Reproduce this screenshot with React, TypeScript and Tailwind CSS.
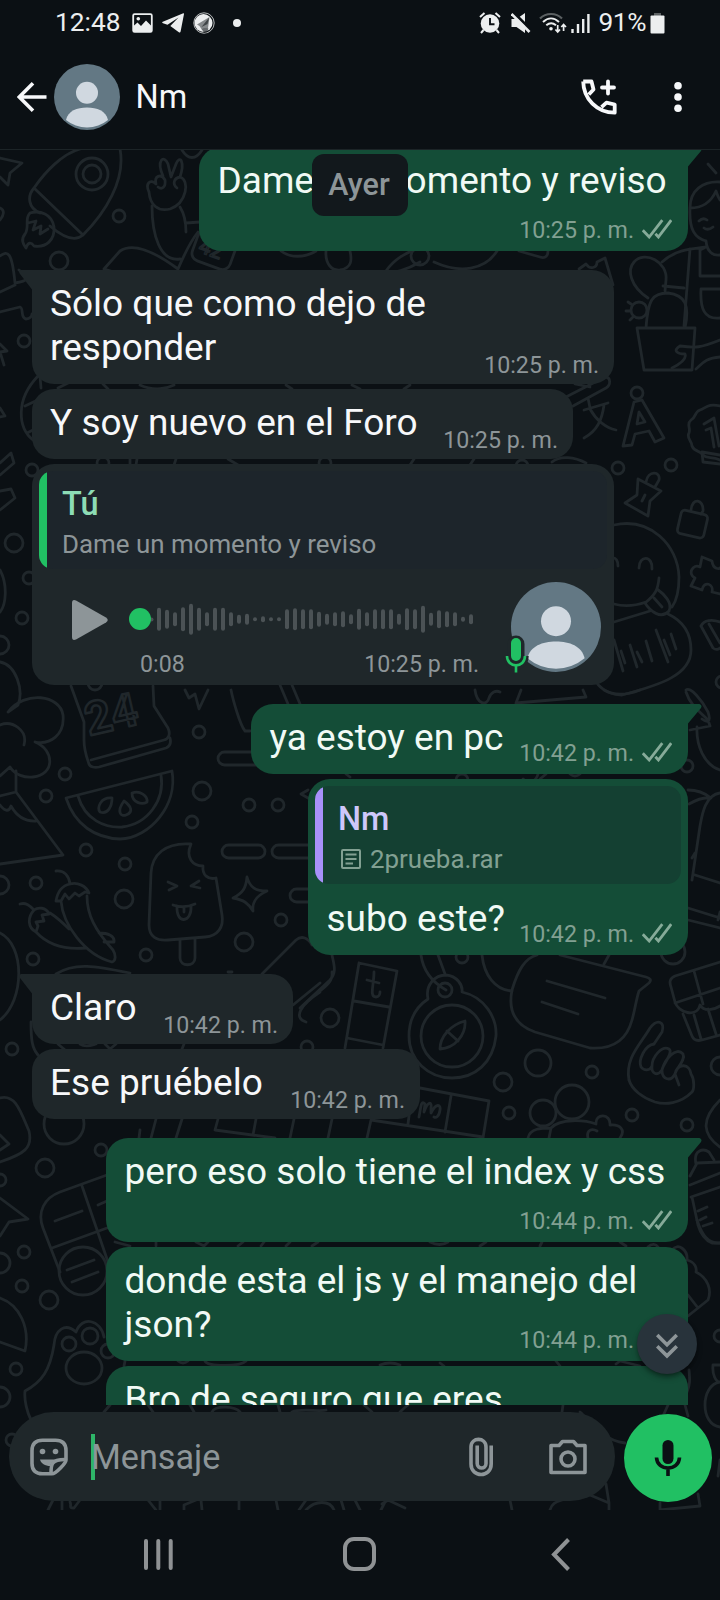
import type { ReactNode } from 'react'
import clsx from 'clsx'

const WAVE = [
    23, 19, 14, 24, 31, 23, 14, 23, 23, 14, 9, 11, 4, 6, 4, 4, 20, 22, 20, 20, 15, 11, 14, 16, 10,
    21, 14, 20, 20, 20, 11, 22, 20, 27, 13, 18, 16, 14, 5, 10,
]

// x, y, radius of the small bubbles spread over the wallpaper
const DOTS = [
    [119, 216, 6], [59, 261, 9], [24, 341, 6], [32, 470, 6], [14, 543, 9], [29, 578, 6], [22, 618, 6], [0, 645, 9],
    [199, 732, 6], [65, 774, 6], [46, 796, 6], [202, 791, 9], [249, 805, 6], [278, 805, 6], [192, 822, 6],
    [86, 850, 6], [125, 864, 6], [36, 883, 6], [0, 885, 9], [124, 899, 9], [146, 955, 6], [33, 959, 6],
    [281, 920, 6], [244, 942, 9], [12, 1049, 6], [330, 1018, 9], [307, 1047, 6], [503, 1082, 9], [538, 1063, 13],
    [592, 1072, 6], [509, 1113, 6], [543, 1113, 13], [572, 1102, 17], [632, 1115, 6], [687, 1125, 6],
    [673, 952, 12], [462, 957, 6], [720, 1066, 9], [618, 468, 6], [671, 465, 6], [637, 393, 6], [687, 766, 6],
    [462, 780, 6], [101, 1150, 6], [45, 1168, 9], [0, 1180, 6], [24, 1252, 6], [0, 1263, 10], [22, 1286, 6],
    [49, 1300, 9], [16, 1369, 6], [0, 1397, 10], [12, 1440, 6], [720, 1336, 6], [64, 1124, 20], [325, 463, 6],
    [103, 463, 6], [522, 466, 6], [722, 682, 6], [95, 683, 7],
]

function Wallpaper() {
    return (
        <svg
            className="absolute inset-0 h-full w-full"
            viewBox="0 150 720 1360"
            fill="none"
            stroke="#20272b"
            strokeWidth="2.8"
            strokeLinecap="round"
            strokeLinejoin="round"
        >
            {DOTS.map(([x, y, r], i) => (
                <circle key={i} cx={x} cy={y} r={r} />
            ))}

            {/* star, rocket and hand */}
            <path d="M0 158L22 163L10 173L8 185L0 177M0 208C5 210 4 215 0 220" />
            <path d="M34 188L83 235M34 188C45 172 62 154 80 149M120 149C126 180 105 213 83 235C75 242 64 238 50 226M34 188C27 196 28 208 40 213" />
            <circle cx="92" cy="174" r="16" />
            <circle cx="92" cy="174" r="9" />
            <path d="M30 213C24 219 30 227 25 234C20 240 24 245 26 248C28 242 31 242 34 246C46 248 55 240 54 227C52 214 40 210 30 213M28 223L36 221L33 230L41 226L40 234L48 229" />
            <path d="M163 176C156 160 164 154 168 164L171 177L176 164C180 154 185 162 180 177C190 180 187 203 170 209C158 212 150 205 149 192C145 184 150 178 156 184C154 176 161 173 165 180C166 187 162 190 158 187M177 188C172 184 174 178 180 177" />
            <path d="M152 206C152 235 160 262 180 259M180 207C185 215 186 225 186 232M186 223L200 222M104 269L120 251C133 242 155 252 178 269C184 255 190 242 198 232M104 269L134 278" />
            <rect x="194" y="235" width="40" height="31" rx="8" transform="rotate(20 214 250)" />
            <text x="199" y="257" fontSize="21" fontFamily="Roboto, sans-serif" strokeWidth="1.5" transform="rotate(20 214 250)">42</text>
            <path d="M281 251C290 258 305 258 316 251M326 251C325 264 332 271 340 270C352 268 352 260 350 251M386 271C395 258 407 253 414 250M386 271C390 276 410 268 420 262M434 262C460 274 485 270 497 251M519 251L540 257C546 259 548 255 548 251M182 150C188 160 196 160 202 150" />
            <circle cx="420" cy="256" r="9" />
            <path d="M579 269L586 264C590 270 597 268 597 262L605 258L613 285" />

            {/* girl and cactus */}
            <path d="M690 208C690 190 703 181 720 182M708 164L716 173M690 208C704 208 712 200 716 191C718 197 720 200 720 200M690 208C689 230 695 238 706 241M699 221Q703 217 707 220M704 228Q708 231 713 227M706 241C707 252 713 256 720 255" />
            <path d="M662 262C675 250 690 249 706 247M690 249L684 326M706 247L700 250V276H720M701 289H720M701 289C700 308 704 320 720 318M663 286L684 288" />
            <path d="M648 298C630 286 627 270 634 262C645 250 668 262 666 280L665 291M646 328C648 300 652 293 668 293C685 295 690 305 685 328M637 328H695L692 370H644Z" />
            <circle cx="639" cy="310" r="8" />
            <path d="M631 304L628 302M630 311H626M633 317L630 320M720 340C700 348 696 348 680 346C673 350 676 354 685 354C687 359 680 364 672 368M720 357C705 358 702 364 696 369" />
            <path d="M0 256C8 250 12 252 15 283M15 283C28 281 30 279 19 270M0 292L15 285M0 312L20 307C24 308 20 318 26 319C30 319 32 316 32 314M0 344L7 351L0 352L4 365M0 408L5 416L0 417" />
            <path d="M38 376C15 400 18 428 33 440M40 376L41 388M25 406L42 398M27 433L35 429" />

            {/* pencil, letters, stamp */}
            <path d="M564 398L605 377C611 377 611 385 606 388L573 406M575 384L590 387M588 398L590 408M584 410L608 403M604 405C602 420 597 431 584 438M590 409C596 420 606 428 616 430" />
            <path d="M634 402L642 400L664 438L655 442L649 431L635 434L632 445L623 446ZM639 412L637 424L645 422Z" />
            <path d="M700 410C694 412 696 418 691 420C686 424 691 428 689 433C686 438 692 441 692 446C694 452 700 450 703 455C707 459 712 456 720 460M700 410C706 408 708 403 720 406" />
            <path d="M704 424L714 418L719 446M706 430L711 428L714 447" />

            {/* pin, padlock, puzzle */}
            <path d="M638 479L661 491L650 501L648 516L625 503L637 495ZM646 482C648 470 661 471 659 480L655 487M645 495L642 501" />
            <rect x="679" y="512" width="27" height="24" rx="4" transform="rotate(13 692 524)" />
            <path d="M691 510C692 497 704 499 703 511L701 514M720 455L702 452L703 462L720 464" />
            <path d="M702 557L712 561C713 570 720 569 720 568M702 557L700 567C693 563 687 574 695 578L691 586L702 590C704 580 714 584 712 592L720 594M701 626C704 620 712 619 720 622M701 626L713 648C717 651 720 648 720 648M709 624L720 643" />
            <path d="M614 525C650 517 678 545 679 577C679 590 677 600 672 607M614 604C625 607 635 606 646 602M639 568C639 555 653 555 652 569M612 558C616 557 618 561 618 566M659 578C658 590 655 595 645 603C650 611 661 620 669 611C673 603 664 594 657 589M654 598L662 607" />
            <path d="M614 622L650 611M668 614C685 622 691 635 691 650C691 675 660 685 622 695C610 695 600 688 597 683M614 640L623 671M621 651L625 663M630 645L637 667M637 652L642 662M646 641L652 661M656 630L668 662M664 640L670 655M671 634L676 649" />

            {/* gaps between bubbles */}
            <path d="M58 388L74 380M103 384L108 389M140 385C155 392 168 388 174 385M286 385L292 389M352 385L360 389M410 385L404 389M130 459V465M137 459L136 465M176 459L174 465M228 459L238 465M410 465L414 459M470 465L474 459M552 462C560 455 575 457 586 463" />

            {/* tree, calendar, watermelon */}
            <path d="M0 570C8 585 6 605 0 612M0 463L11 453L14 463L0 475M0 491L11 489L15 498L0 510M0 662C16 665 24 690 18 705L8 712C25 690 60 695 63 715C65 735 50 745 35 742C55 750 55 775 33 777C25 778 15 775 10 767L0 776M0 725C12 720 28 730 24 745" />
            <path d="M16 771V792L63 855L0 864M0 796L16 792M0 805Q8 815 11 806Q20 822 36 821" />
            <path d="M71 686L84 722V740C84 751 87 758 89 764C90 767 95 768 99 767L166 748C171 746 171 742 170 738M153 686L154 706L168 728C171 735 168 739 164 740L91 760" />
            <text x="88" y="735" fontSize="46" fontFamily="Roboto, sans-serif" fontWeight="700" strokeWidth="2.4" transform="rotate(-13 92 731)">24</text>
            <path d="M185 690L189 698L195 694L199 709L208 690M231 690C233 700 240 725 245 731H250M280 685L288 704M292 685L300 704" />
            <path d="M66 798L172 771C178 805 150 838 120 839C95 838 75 825 66 798ZM78 796C85 820 105 828 122 827C148 824 165 800 161 775" />
            <path d="M112 798C100 797 97 808 100 812C108 815 112 806 112 798ZM124 801C116 812 121 817 126 815C134 812 131 806 124 801ZM132 793C132 803 142 805 147 802C148 796 140 790 132 793Z" />
            <rect x="218" y="752" width="60" height="13" rx="6.5" />
            <rect x="222" y="845" width="43" height="13" rx="6.5" />
            <rect x="272" y="845" width="60" height="13" rx="6.5" />
            <rect x="290" y="889" width="50" height="13" rx="6.5" />
            <path d="M308 790L301 794L308 798" />

            {/* ice cream, sparkle, peppers */}
            <path d="M191 844C165 842 152 855 151 873L149 925C149 937 157 941 168 940L205 937C218 936 224 927 222 915L216 878C208 880 202 875 203 866C193 866 185 858 191 844ZM180 940V958C180 967 195 967 195 958V939" />
            <path d="M168 882L177 886L169 890M199 881L191 886L200 888M173 905Q184 909 195 904M177 906C176 925 192 923 191 906M184 907V912" />
            <path d="M247 877C250 888 256 891 267 891C256 896 252 902 253 911C248 903 244 900 233 898C243 893 246 888 247 877Z" />
            <path d="M56 871C65 870 69 877 70 884M70 884C60 886 57 895 56 901L61 901L65 894L69 899L75 893L79 896L85 892L89 893C86 886 78 882 70 884ZM61 901C63 925 85 955 112 962C116 961 116 955 113 950C95 930 87 915 87 896M20 904C26 902 30 906 34 910M34 910C27 918 28 928 36 932L38 926L36 922L44 921L42 915L49 914C46 907 38 907 34 910ZM36 932C48 945 65 950 86 948M50 913C58 918 64 924 69 929M99 933C108 933 115 936 114 942L104 942M0 933C25 945 25 1000 0 1020" />
            <path d="M56 974C75 962 95 966 130 973M262 974L296 940C302 935 308 938 312 945M293 1005L320 983M320 992C300 1005 293 1018 306 1022M31 1022C31 1040 32 1048 38 1055M58 1044L65 1050M80 1044C86 1048 92 1045 96 1044M105 1044L110 1049L116 1044M184 1044L182 1049M228 972H232" />

            {/* right column around the sent bubbles */}
            <path d="M475 690C477 705 487 706 489 698C491 692 496 690 500 692M521 690L516 703L586 697L583 690M604 690C616 697 630 694 640 690M686 692C690 705 700 712 708 720L710 726L690 730M686 690C690 686 702 700 708 712C712 724 706 722 702 719M697 727C696 745 704 765 720 770M688 790C698 790 706 794 711 798C705 797 696 800 689 804M720 793C705 795 702 815 700 826L692 880M695 875L720 883M688 908L720 918M688 920L720 928M720 912L718 920M692 858L695 853" />
            <path d="M346 774L350 777M523 779C528 785 536 782 538 774M546 774L540 779M570 774Q575 778 580 774" />
            <path d="M332 955C334 965 337 972 330 980L300 1008M332 972C334 985 318 990 306 1003" />

            {/* tiles, compass, speech bubble */}
            <path d="M359 963L397 971L383 1048M359 963L345 1048M354 1001L389 1007M347 1038L383 1045M420 1088L489 1101L483 1138M451 1096L445 1132M412 1092L408 1124M371 1120L483 1137M332 1119L328 1138M371 1120L367 1138M151 1138L156 1119M176 1138L182 1119M218 1119L215 1130L275 1138M256 1119L253 1135M294 1119L290 1138M140 1130L139 1138" />
            <path d="M374 972C374 985 369 997 376 997C379 997 380 994 380 992M367 980L379 983M419 1117C421 1106 421 1100 425 1104L424 1112C428 1101 432 1101 431 1108V1113C436 1103 441 1104 440 1110C439 1117 436 1118 434 1117" />
            <path d="M428 999C425 985 435 975 446 975C457 976 463 985 462 992C485 997 497 1018 496 1036C493 1063 475 1078 452 1078C428 1078 409 1060 409 1036C409 1020 416 1007 428 999ZM421 955C423 970 432 982 446 990M438 955L445 974" />
            <circle cx="452" cy="1036" r="31" />
            <circle cx="445" cy="990" r="7" />
            <path d="M465 1021C466 1035 455 1048 440 1049C440 1037 450 1025 465 1021ZM447 1031L458 1041M482 955C484 975 495 990 512 991" />
            <path d="M537 955C525 958 518 970 512 990C508 1010 515 1025 535 1032L590 1048C618 1050 628 1035 632 1020C635 1010 636 1000 639 991L649 983C652 980 650 978 646 977L560 955M609 955L604 964M547 981L605 998M542 1002L578 1014" />
            <path d="M720 962L675 976C670 978 669 982 671 987L675 1002C678 1013 697 1018 700 1005C704 1012 714 1010 720 1006M675 1003L720 988M694 971L703 1004M683 1014L692 1036C694 1041 698 1041 702 1040L720 1035M694 1015L701 1039M708 1009L716 1034" />
            <path d="M629 1080C625 1058 640 1045 650 1028C658 1018 665 1022 662 1032L654 1044" />
            <path d="M654 1044C645 1045 638 1060 641 1067C644 1071 650 1071 652 1066M652 1066C652 1057 662 1045 669 1049C674 1052 662 1066 662 1070M652 1066C651 1073 657 1077 662 1070M662 1070C665 1059 676 1046 683 1054C686 1060 676 1068 675 1074C671 1082 662 1080 662 1070M675 1074C678 1062 690 1064 691 1074C695 1080 694 1090 692 1092C680 1104 665 1105 655 1102C643 1098 632 1090 629 1080M675 1074L679 1085" />
            <path d="M528 1138C530 1128 542 1128 551 1128C560 1118 585 1120 596 1124C595 1113 611 1113 610 1125C620 1124 626 1130 620 1138M549 1138L551 1128M588 1138C586 1130 592 1128 597 1131M720 1100C700 1120 703 1135 720 1147M696 1164C693 1150 703 1148 709 1152L714 1160M690 1176L697 1163L720 1162M690 1185L720 1173M691 1197L720 1187M692 1197L698 1225C701 1235 705 1240 712 1243H720M698 1211L707 1207M700 1220L706 1217M703 1226L712 1223" />

            {/* left edge below the bubbles */}
            <path d="M0 1098C15 1094 20 1110 29 1131C33 1148 24 1154 0 1162M0 1135L9 1144L0 1150M0 1198L28 1219L9 1222L0 1236M107 1175L60 1192C44 1198 37 1212 43 1228L60 1272M107 1228L52 1248M82 1186L108 1262M55 1221L82 1211M98 1205L107 1201M67 1270L94 1260M72 1282L98 1272" />
            <circle cx="83" cy="1271" r="24" />
            <path d="M0 1298C20 1305 30 1328 25 1351L0 1342M104 1337C101 1320 82 1315 76 1332C65 1322 55 1330 54 1345C50 1370 42 1382 25 1391C24 1400 27 1412 31 1420M125 1361L124 1366" />
            <circle cx="69" cy="1344" r="7" />
            <circle cx="90" cy="1336" r="8" />
            <circle cx="108" cy="1351" r="7" />
            <ellipse cx="84" cy="1368" rx="18" ry="16" />
            <path d="M115 1242L130 1246M156 1242V1246M196 1242L204 1246L208 1242M238 1246L243 1242M264 1242L261 1246M286 1246L290 1242M312 1246L318 1242M178 1361Q183 1365 188 1361M205 1361C208 1367 240 1367 246 1361M430 1242Q440 1247 448 1242M480 1246L486 1242M540 1246L542 1242M620 1242L626 1246M440 1363L444 1366M556 1361L560 1366M380 1365Q390 1361 400 1365M616 1364L620 1361L640 1366" />

            {/* right edge and behind the composer */}
            <path d="M697 1220C702 1235 708 1244 720 1243M648 1247C652 1243 656 1244 658 1247M672 1250C678 1242 688 1250 687 1260C695 1262 697 1268 696 1272C708 1278 712 1290 708 1300L688 1316M688 1295L698 1308M689 1370C690 1380 690 1385 687 1392M720 1365H713C712 1375 716 1382 720 1382M720 1382C700 1385 700 1425 720 1427M720 1460L718 1476" />
            <path d="M104 1412L110 1405M148 1405L153 1412M190 1405L194 1412M212 1412C215 1405 235 1406 240 1412M278 1405L280 1412M292 1412C300 1408 320 1412 326 1410M364 1405L372 1412M400 1412Q404 1408 408 1405M562 1412L563 1405M580 1412C590 1420 600 1440 625 1443M668 1405L663 1416M685 1405L688 1416" />
            <path d="M48 1510L53 1500M62 1510V1500M70 1502C72 1506 68 1508 74 1508L80 1500M148 1500L156 1510M160 1500V1510M184 1510V1505L196 1500M201 1500L202 1510M239 1500V1510M276 1500L278 1510M299 1510L306 1500M306 1510C315 1500 330 1500 334 1510M341 1500L344 1510M355 1500L360 1510M381 1510L386 1500M382 1504L388 1500L405 1508M510 1500L512 1510M550 1510C552 1503 556 1502 562 1500M606 1484L609 1503L590 1495M609 1503V1510M660 1503V1510L700 1506L698 1494" />
        </svg>
    )
}

function Avatar({ className }: { className?: string }) {
    return (
        <svg className={clsx('rounded-full', className)} viewBox="0 0 66 66">
            <rect width="66" height="66" fill="#637884" />
            <circle cx="33" cy="28.7" r="11" fill="#d0d8e0" />
            <path d="M12 56C14 47 23 43.6 33 43.6S52 47 54 56A33 33 0 0 1 12 56Z" fill="#d0d8e0" />
        </svg>
    )
}

function Ticks() {
    return (
        <svg className="mb-[3px] ml-2 h-[20px] w-[30px]" viewBox="0 0 30 20" fill="none" stroke="#86ab99" strokeWidth="2.8">
            <path d="M.8 11.2L7.2 18L20.3 1.2M13.4 14.8L16.4 18L29.2 1.2" />
        </svg>
    )
}

function Time({ children, sent }: { children: string; sent?: boolean }) {
    return (
        <div className={clsx('flex shrink-0 items-end self-end text-[23.2px] leading-[24px] whitespace-nowrap', sent ? 'text-[#82a092]' : 'text-[#8d9598]')}>
            <span>{children}</span>
            {sent && <Ticks />}
        </div>
    )
}

interface BubbleProps {
    children: ReactNode
    className?: string
    sent?: boolean
    tail?: boolean
}

function Bubble({ children, className, sent, tail }: BubbleProps) {
    return (
        <div
            className={clsx(
                'relative flex shrink-0 flex-col rounded-[22px]',
                sent ? 'self-end bg-[#144d37]' : 'self-start bg-[#1f272a]',
                tail && (sent ? 'rounded-tr-none' : 'rounded-tl-none'),
                className,
            )}
        >
            {tail && sent && (
                <svg className="absolute top-0 -right-[14px] h-[21px] w-[15px]" viewBox="0 0 15 21" fill="#144d37">
                    <path d="M0 0H12.5Q15.5 1 14 4L1 19.5V21H0Z" />
                </svg>
            )}
            {tail && !sent && (
                <svg className="absolute top-0 -left-[13px] h-[21px] w-[14px]" viewBox="0 0 14 21" fill="#1f272a">
                    <path d="M14 0H2Q-1 1 1 4L13 19.5V21H14Z" />
                </svg>
            )}
            {children}
        </div>
    )
}

function Row({ text, time, sent }: { text: ReactNode; time: string; sent?: boolean }) {
    return (
        <div className={clsx('flex justify-between pt-3', sent ? 'pr-4 pb-[9px] pl-[18.5px]' : 'pr-[15px] pb-[7px] pl-[18px]')}>
            <p className={clsx('w-0 flex-1 text-[37px] leading-[44px] whitespace-nowrap', sent ? 'mb-[5px] text-[#f1faf5]' : 'mb-[7px] text-[#f7f8fa]')}>{text}</p>
            <Time sent={sent}>{time}</Time>
        </div>
    )
}

function WideRow({ text, time }: { text: string; time: string }) {
    return (
        <div className="flex flex-col pt-3 pr-4 pb-[9px] pl-[18.5px]">
            <p className="mb-[15px] text-[37px] leading-[44px] whitespace-nowrap text-[#f1faf5]">{text}</p>
            <Time sent>{time}</Time>
        </div>
    )
}

function StatusBar() {
    return (
        <div className="flex h-[46px] shrink-0 items-center justify-between pr-[55px] pl-[55px] text-[26.3px] text-[#eceeef]">
            <div className="flex items-center">
                <span className="w-[77px]">12:48</span>
                <svg className="h-5 w-[21px]" viewBox="0 0 21 20">
                    <rect x="1.2" y="1.2" width="18.6" height="17.6" rx="1.4" fill="none" stroke="#eceeef" strokeWidth="1.8" />
                    <path d="M1.5 18V13L5.5 9.5L9 13L14 7.5L19.5 13V18Z" fill="#eceeef" />
                    <circle cx="6.3" cy="5.8" r="1.8" fill="#eceeef" />
                </svg>
                <svg className="ml-[9px] h-5 w-[22px]" viewBox="0 0 22 20" fill="#eceeef">
                    <path d="M21.3 .3L.8 8.8Q-.6 9.6 1 10.2L5.5 11.8L16.5 4.5L8.3 13L17.2 19.4Q18.3 19.8 18.6 18.5L22 1Q22 0 21.3 .3Z" />
                </svg>
                <svg className="ml-[9px] h-[22px] w-[22px]" viewBox="0 0 22 22">
                    <circle cx="11" cy="11" r="10.2" fill="none" stroke="#b9bcbd" strokeWidth="1" />
                    <circle cx="10.5" cy="11" r="9" fill="#eceeef" />
                    <path d="M16.5 5L4 12.5L6.5 14L9 18L11 15.5L15 16.5Z" fill="#85898b" />
                    <path d="M8.5 15L16.2 5.5L14.5 12Z" fill="#3f4446" />
                    <path d="M9 17.5L11 15.5L15.5 16.5L14 20.5L11 21Z" fill="#0b1014" opacity=".6" />
                </svg>
                <span className="ml-[18px] h-2 w-2 rounded-full bg-[#eceeef]" />
            </div>
            <div className="flex items-center">
                <svg className="h-[22px] w-[22px]" viewBox="0 0 22 22">
                    <circle cx="11" cy="11.5" r="9.3" fill="#eceeef" />
                    <path d="M1 5L5.5 1M21 5L16.5 1M4.5 18L2 21M17.5 18L20 21" stroke="#eceeef" strokeWidth="2" />
                    <path d="M11 6V12.2H15.5" fill="none" stroke="#0b1014" strokeWidth="1.9" />
                </svg>
                <svg className="ml-[10px] h-5 w-5" viewBox="0 0 20 20">
                    <path d="M.5 6H5.5L14 0V20L5.5 14H.5Z" fill="#eceeef" />
                    <path d="M1.5 -1.5L20.5 17.5" stroke="#0b1014" strokeWidth="3" />
                    <path d="M.5 1L18.5 19" stroke="#eceeef" strokeWidth="2.6" />
                </svg>
                <svg className="ml-[8px] h-[22px] w-[28px]" viewBox="0 0 28 22" fill="none">
                    <path d="M1 6.5C7 .5 17 .5 23 6.5" stroke="#5b6062" strokeWidth="2.2" />
                    <path d="M4 10C9 5.3 15 5.3 20 10M7.3 13.3C10.5 10.6 13.8 10.6 17 13.3" stroke="#eceeef" strokeWidth="2" />
                    <circle cx="12" cy="16.7" r="1.8" fill="#eceeef" />
                    <path d="M18.7 13V20M16.4 17.5L18.7 20L21 17.5M24.6 19V12.5M22.3 15L24.6 12.5L27 15" stroke="#eceeef" strokeWidth="1.7" />
                </svg>
                <svg className="ml-[4px] h-5 w-[19px]" viewBox="0 0 19 20" stroke="#eceeef" strokeWidth="2.4">
                    <path d="M1.5 16V20M7 11V20M12.2 6V20M17.4 1V20" />
                </svg>
                <span className="ml-[8px] tracking-[-0.4px]">91%</span>
                <svg className="ml-[4px] h-[21px] w-[15px]" viewBox="0 0 15 21">
                    <path d="M4 0H11V3H4Z" fill="#5b6062" />
                    <rect x=".5" y="2.5" width="14" height="18" rx="1" fill="#eceeef" />
                </svg>
            </div>
        </div>
    )
}

function Header() {
    return (
        <header className="flex h-[104px] shrink-0 items-center border-b border-[#1c2427] pb-[2px] pl-[17px]">
            <svg className="h-[30px] w-[30px]" viewBox="0 0 30 30" fill="none" stroke="#f7f8fa" strokeWidth="3.6">
                <path d="M16 1.3L2.3 15L16 28.7M2.5 15H29.5" />
            </svg>
            <Avatar className="ml-[7px] h-[66px] w-[66px]" />
            <h1 className="ml-[15.5px] flex-1 pt-[2px] text-[32.5px] text-[#f7f8fa]">Nm</h1>
            <svg className="h-[36px] w-[36px]" viewBox="0 0 36 36" fill="none" stroke="#f7f8fa" strokeWidth="3.8" strokeLinejoin="round">
                <path d="M2.2 2.5H10.5L12.5 10.5L7.8 15.5M2.2 2.5C2.5 20 16 33.7 33.7 33.7V25.5L25.5 23.6L20.5 28.2" />
                <path d="M27 2.5V14.5M21 8.5H33" strokeWidth="3.8" strokeLinecap="round" />
            </svg>
            <svg className="mr-[38px] ml-[57px] h-8 w-2" viewBox="0 0 8 32" fill="#f7f8fa">
                <circle cx="4" cy="4.7" r="3.8" />
                <circle cx="4" cy="16" r="3.8" />
                <circle cx="4" cy="27.3" r="3.8" />
            </svg>
        </header>
    )
}

interface QuoteProps {
    children: ReactNode
    name: string
    sent?: boolean
}

function Quote({ children, name, sent }: QuoteProps) {
    return (
        <div className={clsx('mx-[7px] mt-[7px] flex h-[98px] overflow-hidden rounded-[14px]', sent ? 'bg-[#144032]' : 'bg-[#1d252b]')}>
            <span className={clsx('w-2', sent ? 'bg-[#a791fa]' : 'bg-[#21c063]')} />
            <div className="pt-[13px] pl-[15px]">
                <p className={clsx('text-[32.5px] leading-[40px] font-medium', sent ? 'text-[#cec7fa]' : 'text-[#8ddcb5]')}>{name}</p>
                <div className={clsx('mt-[5px] flex items-center text-[25.9px] leading-[30px]', sent ? 'text-[#82a092]' : 'text-[#8d9598]')}>
                    {children}
                </div>
            </div>
        </div>
    )
}

function VoiceNote() {
    return (
        <div className="flex h-[116px] pl-[39px]">
            <svg className="mt-[30px] h-[42px] w-[38px]" viewBox="0 0 38 42" fill="#8d9598">
                <path d="M1 4Q1 0 5 1.5L35 18.5Q38.5 21 35 23.5L5 40.5Q1 42 1 38Z" />
            </svg>
            <div className="ml-[19px] w-[348px]">
                <svg className="mt-[34px] h-[32px] w-[348px]" viewBox="0 0 348 32">
                    <rect x="21.5" y="14.5" width="4" height="4" rx="2" fill="#4b5255" />
                    {WAVE.map((h, i) => (
                        <rect key={i} x={29 + i * 8} y={16.3 - h / 2} width="4" height={h} rx="2" fill="#4b5255" />
                    ))}
                    <circle cx="12" cy="16" r="11" fill="#21c063" />
                </svg>
                <div className="mt-[17px] -mr-[3px] flex justify-between pl-3 text-[23.2px] leading-[24px] text-[#8d9598]">
                    <span>0:08</span>
                    <span>10:25 p. m.</span>
                </div>
            </div>
            <div className="relative mt-[13px] ml-[35px] h-[90px] w-[90px]">
                <Avatar className="h-[90px] w-[90px]" />
                <svg className="absolute top-[52px] -left-[8.5px] h-[42px] w-[26px]" viewBox="0 0 26 42" fill="none">
                    <rect x="4.5" y="1.5" width="17" height="31" rx="8.5" fill="#1f272a" />
                    <path d="M3.8 22C4 36 22 36 22.2 22" stroke="#1f272a" strokeWidth="7" />
                    <rect x="8" y="4" width="10" height="23" rx="5" fill="#21c063" />
                    <path d="M4 22C4 34.5 22 34.5 22 22M13 31V38.5" stroke="#21c063" strokeWidth="2.6" />
                </svg>
            </div>
        </div>
    )
}

function Composer() {
    return (
        <div className="relative mt-[7px] ml-[9px] flex h-[89px] items-center">
            <div className="flex h-full w-[606px] items-center rounded-full bg-[#1f272a] pl-[20px]">
                <svg className="h-[40px] w-[40px]" viewBox="0 0 40 40" fill="none" stroke="#8d9598" strokeWidth="3.6" strokeLinejoin="round">
                    <path d="M13.5 3.2H26.5Q37 3.2 37 13.5V23C37 26 27 36.8 23 36.8H13.5Q3 36.8 3 26.5V13.5Q3 3.2 13.5 3.2Z" />
                    <path d="M22 36C22 28 22 22.5 36 22.5" />
                    <circle cx="13.5" cy="14.5" r="2.8" fill="#8d9598" stroke="none" />
                    <circle cx="26.5" cy="14.5" r="2.8" fill="#8d9598" stroke="none" />
                    <path d="M11 22.5H29C23 24 22 26 21.5 29C16 29 12 26.5 11 22.5Z" fill="#8d9598" stroke="none" />
                </svg>
                <span className="ml-[22px] h-[46px] w-1 bg-[#2eb568]" />
                <span className="-ml-[4px] flex-1 pt-[2px] text-[34.2px] text-[#8d9598]">Mensaje</span>
                <svg className="h-[40px] w-[26px]" viewBox="0 0 26 40" fill="none" stroke="#8d9598" strokeWidth="3.6">
                    <path d="M23.2 8.5V27C23.2 41 3 41 3 27V10C3 -.2 18 -.2 18 10V26.5C18 32.5 9.2 32.5 9.2 26.5V8.5" />
                </svg>
                <svg className="mr-[27px] ml-[54px] h-[36px] w-[40px]" viewBox="0 0 40 36" fill="none" stroke="#8d9598" strokeWidth="3.6" strokeLinejoin="round">
                    <path d="M3 6.5H11L14.5 2.5H25.5L29 6.5H37V33.5H3Z" />
                    <circle cx="20" cy="20" r="7" />
                </svg>
            </div>
            <div className="mt-[2px] ml-[9px] flex h-[88px] w-[88px] items-center justify-center rounded-full bg-[#21c063]">
                <svg className="h-[38px] w-[28px]" viewBox="0 0 28 38" fill="none">
                    <rect x="8.5" y="1" width="11" height="24" rx="5.5" fill="#0b1014" />
                    <path d="M2.5 18.5C3 32.5 25 32.5 25.5 18.5M14 29V37" stroke="#0b1014" strokeWidth="3.6" />
                </svg>
            </div>
        </div>
    )
}

function NavBar() {
    return (
        <nav className="flex h-[90px] shrink-0 items-start pt-[27px] pl-[143px]">
            <svg className="mt-[1px] h-[34px] w-[31px]" viewBox="0 0 31 34" stroke="#8f9294" strokeWidth="4" strokeLinecap="round">
                <path d="M3 3V30M15.3 3V30M27.7 3V30" />
            </svg>
            <span className="ml-[169px] h-[34px] w-[33px] rounded-[11px] border-4 border-[#8f9294]" />
            <svg className="ml-[174px] h-[34px] w-[20px]" viewBox="0 0 20 34" fill="none" stroke="#8f9294" strokeWidth="4">
                <path d="M18.5 2.5L4 17.5L18.5 32.5" />
            </svg>
        </nav>
    )
}

export default function App() {
    return (
        <div className="flex h-[1600px] w-[720px] flex-col overflow-hidden bg-[#0b1014] font-[Roboto,sans-serif]">
            <StatusBar />
            <Header />

            <main className="relative flex h-[1360px] shrink-0 flex-col overflow-hidden">
                <Wallpaper />

                <div className="relative flex h-[1255px] shrink-0 flex-col overflow-hidden px-8">
                    <Bubble sent tail className="-mt-[3px] h-[104px] w-[489px]">
                        <WideRow text="Dame un momento y reviso" time="10:25 p. m." />
                    </Bubble>

                    <Bubble tail className="mt-[19px] h-[114px] w-[582px]">
                        <Row text={<>Sólo que como dejo de<br />responder</>} time="10:25 p. m." />
                    </Bubble>
                    <Bubble className="mt-[5px] h-[70px] w-[541px]">
                        <Row text="Y soy nuevo en el Foro" time="10:25 p. m." />
                    </Bubble>
                    <Bubble className="mt-[5px] h-[221px] w-[582px]">
                        <Quote name="Tú">Dame un momento y reviso</Quote>
                        <VoiceNote />
                    </Bubble>

                    <Bubble sent tail className="mt-[19px] h-[70px] w-[437px]">
                        <Row sent text="ya estoy en pc" time="10:42 p. m." />
                    </Bubble>
                    <Bubble sent className="mt-[5px] h-[176px] w-[380px]">
                        <Quote sent name="Nm">
                            <svg className="mr-[9px] ml-[3px] h-[20px] w-[20px]" viewBox="0 0 20 20" fill="none" stroke="#82a092" strokeWidth="2">
                                <rect x="1" y="1" width="18" height="18" rx="1" />
                                <path d="M4.5 5.5H15.5M4.5 10H15.5M4.5 14.5H12" />
                            </svg>
                            2prueba.rar
                        </Quote>
                        <div className="mt-px">
                            <Row sent text="subo este?" time="10:42 p. m." />
                        </div>
                    </Bubble>

                    <Bubble tail className="mt-[19px] h-[70px] w-[261px]">
                        <Row text="Claro" time="10:42 p. m." />
                    </Bubble>
                    <Bubble className="mt-[5px] h-[70px] w-[388px]">
                        <Row text="Ese pruébelo" time="10:42 p. m." />
                    </Bubble>

                    <Bubble sent tail className="mt-[19px] h-[104px] w-[582px]">
                        <WideRow text="pero eso solo tiene el index y css" time="10:44 p. m." />
                    </Bubble>
                    <Bubble sent className="mt-[5px] h-[114px] w-[582px]">
                        <Row sent text={<>donde esta el js y el manejo del<br />json?</>} time="10:44 p. m." />
                    </Bubble>
                    <Bubble sent className="mt-[5px] h-[114px] w-[582px]">
                        <p className="pt-3 pl-[18.5px] text-[37px] leading-[44px] text-[#f1faf5]">Bro de seguro que eres</p>
                    </Bubble>

                    {/* Date chip */}
                    <div className="absolute top-[4px] left-[312px] flex h-[62px] w-[96px] items-center justify-center rounded-[12px] bg-[#12181c] pr-[2px] text-[30.5px] font-medium text-[#8d9598]">
                        Ayer
                    </div>
                </div>

                {/* Jump to latest */}
                <div className="absolute top-[1164px] right-[23px] flex h-[60px] w-[60px] items-center justify-center rounded-full bg-[#28333b] shadow-md shadow-black/40">
                    <svg className="mt-[3px] h-[26px] w-[22px]" viewBox="0 0 22 26" fill="none" stroke="#8d9598" strokeWidth="3.6">
                        <path d="M1.2 2L11 11.7L20.8 2M1.2 13.2L11 22.9L20.8 13.2" />
                    </svg>
                </div>

                <Composer />
            </main>

            <NavBar />
        </div>
    )
}
